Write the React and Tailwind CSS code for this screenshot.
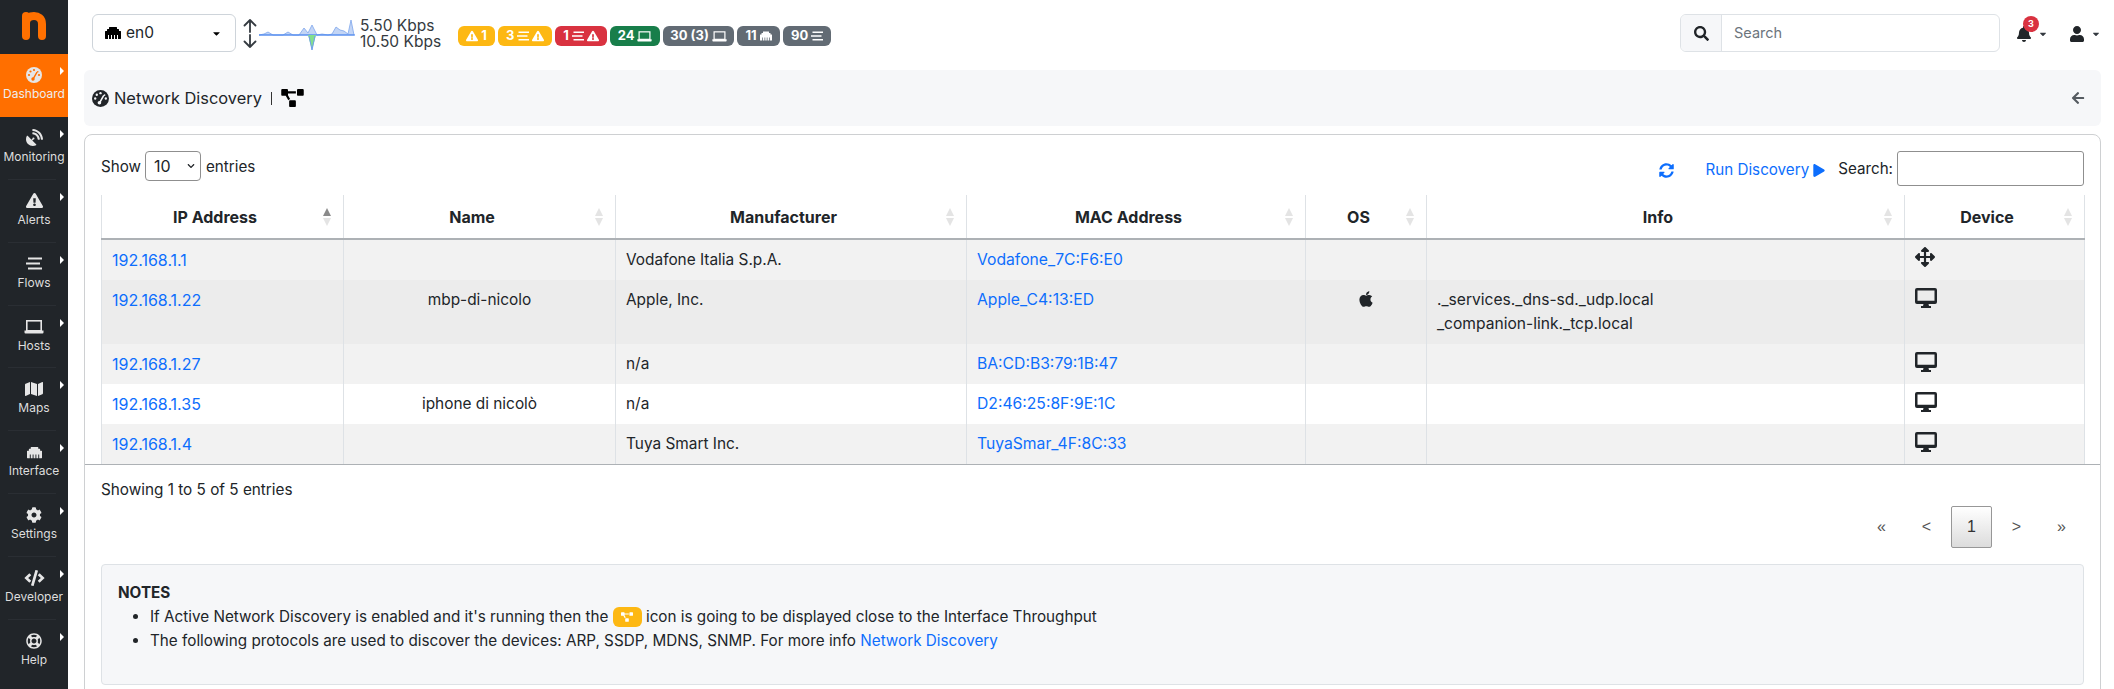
import React from "react";
import {
  FaSatelliteDish, FaExclamationTriangle, FaMap, FaEthernet, FaCog, FaCode,
  FaRegLifeRing, FaSearch, FaBell, FaUser, FaSyncAlt, FaPlay, FaProjectDiagram, FaArrowLeft, FaArrowsAlt,
  FaApple, FaCaretDown, FaChevronDown,
} from "react-icons/fa";

function Gauge({ className, hole }) {
  return (
    <svg viewBox="0 0 16 16" className={className}>
      <circle cx="8" cy="8" r="8" fill="currentColor" />
      <g fill={hole}>
        <circle cx="8" cy="3" r="1.100" />
        <circle cx="4.500" cy="4.500" r="1.100" />
        <circle cx="3" cy="8" r="1.100" />
        <circle cx="13" cy="8" r="1.100" />
        <circle cx="11.800" cy="4.800" r="0.800" />
      </g>
      <path d="M6.800 12.500 L10.800 5.500" stroke={hole} strokeWidth="1.500" strokeLinecap="round" />
      <circle cx="7" cy="12" r="1.700" fill={hole} />
    </svg>
  );
}

function Stream({ className }) {
  return (
    <svg viewBox="0 0 16 13" className={className} fill="none" stroke="currentColor" strokeWidth="2">
      <path d="M2 1.500H16M0 6.500H14M2 11.500H16" />
    </svg>
  );
}

function Laptop({ className }) {
  return (
    <svg viewBox="0 0 20 14" className={className} fill="none">
      <rect x="2.800" y="0.800" width="14.400" height="10" stroke="currentColor" strokeWidth="1.600" />
      <path d="M0.500 10.500H19.500V12.500Q19.500 13.500 18.500 13.500H1.500Q0.500 13.500 0.500 12.500Z" fill="currentColor" />
    </svg>
  );
}

function Monitor({ className }) {
  return (
    <svg viewBox="0 0 22 20" className={className}>
      <path
        fill="currentColor"
        fillRule="evenodd"
        d="M2 0H20A2 2 0 0 1 22 2V14A2 2 0 0 1 20 16H13.500L14 18H16V20H6V18H8L8.500 16H2A2 2 0 0 1 0 14V2A2 2 0 0 1 2 0ZM2.500 2.500V12.700H19.500V2.500Z"
      />
    </svg>
  );
}

function UpDown({ className }) {
  return (
    <svg viewBox="0 0 14 29" className={className} fill="none" stroke="currentColor" strokeWidth="1.800" strokeLinecap="round" strokeLinejoin="round">
      <path d="M7 1V13M1.500 6.500L7 1L12.500 6.500" />
      <path d="M7 16V28M1.500 22.500L7 28L12.500 22.500" />
    </svg>
  );
}

const nav = [
  ["Dashboard", Gauge, "w-[16px] h-[16px]", true],
  ["Monitoring", FaSatelliteDish, "w-[17px] h-[17px]"],
  ["Alerts", FaExclamationTriangle, "w-[17px] h-[17px]"],
  ["Flows", Stream, "w-[16px] h-[13px]"],
  ["Hosts", Laptop, "w-[20px] h-[14px]"],
  ["Maps", FaMap, "w-[18px] h-[16px]"],
  ["Interface", FaEthernet, "w-[17px] h-[15px]"],
  ["Settings", FaCog, "w-[16px] h-[16px]"],
  ["Developer", FaCode, "w-[21px] h-[16px]"],
  ["Help", FaRegLifeRing, "w-[16px] h-[16px]"],
];

function Sidebar() {
  return (
    <aside className="w-[68px] shrink-0 bg-[#212529] h-full flex flex-col">
      <div className="h-[54px] flex items-start justify-center pt-[12px]">
        <svg width="24" height="28" viewBox="0 0 24 28" fill="none" stroke="#ff7000" strokeWidth="8" strokeLinecap="round">
          <path d="M4 24V4" />
          <path d="M4 11C4 6 8 4 12 4S20 6 20 12V24" />
        </svg>
      </div>
      {nav.map(([label, Icon, size, active], i) => (
        <div key={label} className={`relative h-[62.900px] flex flex-col items-center pt-[12px] ${active ? "bg-[#ff6f00]" : ""}`}>
          <span className="h-[18px] flex items-center justify-center text-[#e6e6e6]">
            <Icon className={size} hole="#ff6f00" />
          </span>
          <span className={`text-[12px] leading-[16px] mt-[2px] ${active ? "text-[#eeeeee]" : "text-[#dddddd]"}`}>{label}</span>
          <span className="absolute top-[13px] left-[60px] w-0 h-0 border-y-[4px] border-l-[4px] border-y-transparent border-l-white" />
          {i > 0 && i < 9 && <span className="absolute bottom-0 left-[8px] w-[48px] h-px bg-[#2a2e33]" />}
        </div>
      ))}
    </aside>
  );
}

function Badge({ className, children }) {
  return (
    <span className={`h-[20px] rounded-[6px] flex items-center justify-center gap-[3px] text-white text-[13px] font-bold ${className}`}>
      {children}
    </span>
  );
}

function Spark() {
  return (
    <svg width="98" height="34" viewBox="260 18 98 34" className="ml-[2px] mt-[4px] shrink-0">
      <path d="M260 35 L265 34 L269 32 L274 35 L284 35 L289 32 L294 35 L300 35 L305 28 L309 33 L313 25 L318 35 L323 34 L329 35 L333 34 L337 27 L341 30 L345 31 L349 34 L352 20 L355 35 Z" fill="#c3d5f5" stroke="#7ea6ec" strokeWidth="0.800" />
      <path d="M260 35 H356" stroke="#4080f0" strokeWidth="1.200" />
      <path d="M309 35 L317 35 L313 50 Z" fill="#84e08c" />
      <path d="M310 36 L313 50 L316 36" fill="none" stroke="#6f9ff0" strokeWidth="1" />
    </svg>
  );
}

function TopBar() {
  return (
    <header className="h-[70px] flex items-center pl-[8px] pb-[4px] shrink-0">
      <div className="w-[144px] h-[38px] border border-[#ced4da] rounded-[6px] flex items-center pl-[12px] pr-[13px] text-[15.500px] text-[#212529]">
        <FaEthernet className="w-[16px] h-[16px] text-black" />
        <span className="ml-[5px]">en0</span>
        <FaCaretDown className="ml-auto w-[11px] h-[11px] text-black" />
      </div>
      <UpDown className="ml-[7px] w-[14px] h-[29px] text-[#343a40]" />
      <Spark />
      <div className="ml-[3px] mt-[2px] text-[15.500px] leading-[16px] text-[#343a40]">
        <div>5.50 Kbps</div>
        <div>10.50 Kbps</div>
      </div>
      <div className="flex gap-[3px] ml-[17px] mt-[6px]">
        <Badge className="w-[37px] bg-[#fdb813]"><FaExclamationTriangle className="w-[12px] h-[12px]" />1</Badge>
        <Badge className="w-[54px] bg-[#fdb813]">3<Stream className="w-[12px] h-[10px]" /><FaExclamationTriangle className="w-[12px] h-[12px]" /></Badge>
        <Badge className="w-[52px] bg-[#d93240]">1<Stream className="w-[12px] h-[10px]" /><FaExclamationTriangle className="w-[12px] h-[12px]" /></Badge>
        <Badge className="w-[50px] bg-[#187e4a]">24<Laptop className="w-[15px] h-[11px]" /></Badge>
        <Badge className="w-[71px] bg-[#626b74]">30 (3)<Laptop className="w-[15px] h-[11px]" /></Badge>
        <Badge className="w-[43px] bg-[#626b74]">11<FaEthernet className="w-[12px] h-[12px]" /></Badge>
        <Badge className="w-[48px] bg-[#626b74]">90<Stream className="w-[12px] h-[10px]" /></Badge>
      </div>
      <div className="ml-auto flex w-[320px] h-[38px] border border-[#dee2e6] rounded-[6px] overflow-hidden">
        <div className="w-[41px] bg-[#f6f7f9] border-r border-[#dee2e6] flex items-center justify-center">
          <FaSearch className="w-[15px] h-[15px] text-[#212529]" />
        </div>
        <div className="pl-[12px] flex items-center text-[14.500px] text-[#6c757d]">Search</div>
      </div>
      <div className="relative flex items-center ml-[17px] mt-[2px]">
        <FaBell className="w-[14px] h-[16px] text-[#212529]" />
        <span className="absolute -top-[10px] left-[6px] w-[16px] h-[16px] rounded-full bg-[#d93240] text-white text-[9px] font-bold flex items-center justify-center">3</span>
        <FaCaretDown className="ml-[7px] w-[10px] h-[10px] text-[#343a40]" />
      </div>
      <div className="flex items-center ml-[22px] mt-[2px]">
        <FaUser className="w-[14px] h-[16px] text-[#212529]" />
        <FaCaretDown className="ml-[7px] w-[10px] h-[10px] text-[#343a40]" />
      </div>
    </header>
  );
}

function Sort({ up }) {
  return (
    <span className="absolute right-[12px] top-[13px] flex flex-col gap-[2px]">
      <span className={`w-0 h-0 border-x-[4px] border-b-[8px] border-x-transparent ${up ? "border-b-[#8a8a8a]" : "border-b-[#e4e4e4]"}`} />
      <span className="w-0 h-0 border-x-[4px] border-t-[8px] border-x-transparent border-t-[#e4e4e4]" />
    </span>
  );
}

const columns = [
  ["IP Address", "w-[242px]", true],
  ["Name", "w-[272px]"],
  ["Manufacturer", "w-[351px]"],
  ["MAC Address", "w-[339px]"],
  ["OS", "w-[121px]"],
  ["Info", "w-[478px]"],
  ["Device", "w-[180px]"],
];

const rows = [
  { ip: "192.168.1.1", name: "", man: "Vodafone Italia S.p.A.", mac: "Vodafone_7C:F6:E0", dev: "move", bg: "bg-[#f2f2f2]" },
  { ip: "192.168.1.22", name: "mbp-di-nicolo", man: "Apple, Inc.", mac: "Apple_C4:13:ED", os: true, info: ["._services._dns-sd._udp.local", "_companion-link._tcp.local"], dev: "pc", bg: "bg-[#ececec]" },
  { ip: "192.168.1.27", name: "", man: "n/a", mac: "BA:CD:B3:79:1B:47", dev: "pc", bg: "bg-[#f2f2f2]" },
  { ip: "192.168.1.35", name: "iphone di nicolò", man: "n/a", mac: "D2:46:25:8F:9E:1C", dev: "pc", bg: "bg-white" },
  { ip: "192.168.1.4", name: "", man: "Tuya Smart Inc.", mac: "TuyaSmar_4F:8C:33", dev: "pc", bg: "bg-[#f2f2f2]" },
];

const td = "px-[10px] py-[8px] align-top border-r border-[#dee2e6] h-[40px]";

function DataTable() {
  return (
    <table className="w-[1983px] table-fixed border-collapse text-[15.400px] leading-[24px] text-[#212529]">
      <colgroup>
        {columns.map(([n, w]) => <col key={n} className={w} />)}
      </colgroup>
      <thead>
        <tr className="h-[44px] border-b-2 border-[#adb1b5]">
          {columns.map(([n, , up], i) => (
            <th key={n} className={`relative pl-[11px] pr-[26px] text-center text-[16px] font-bold border-r border-[#dee2e6] ${i === 0 ? "border-l" : ""}`}>
              {n}
              <Sort up={up} />
            </th>
          ))}
        </tr>
      </thead>
      <tbody>
        {rows.map((r) => (
          <tr key={r.ip} className={r.bg}>
            <td className={`${td} border-l`}><a className="block text-[#0d6efd] text-[16px] leading-[24px]">{r.ip}</a></td>
            <td className={`${td} text-center`}>{r.name}</td>
            <td className={td}>{r.man}</td>
            <td className={td}><a className="block text-[#0d6efd] text-[15.700px] leading-[24px]">{r.mac}</a></td>
            <td className={`${td} text-center`}>
              {r.os && <FaApple className="inline-block w-[16px] h-[18px] text-[#212529] -mt-[3px]" />}
            </td>
            <td className={td}>{r.info && r.info.map((l) => <div key={l} className="text-[15.600px]">{l}</div>)}</td>
            <td className={td}>
              {r.dev === "move" ? (
                <FaArrowsAlt className="w-[20px] h-[20px] -mt-[1px] text-[#212529]" />
              ) : (
                <Monitor className="w-[22px] h-[20px] text-[#212529]" />
              )}
            </td>
          </tr>
        ))}
      </tbody>
    </table>
  );
}

function Pager() {
  const items = ["«", "<", "1", ">", "»"];
  return (
    <div className="flex justify-end gap-[4px] mt-[4px] mr-[2px] font-['Liberation_Sans',sans-serif] text-[16px]">
      {items.map((t) => (
        <div
          key={t}
          className={`w-[41px] h-[42px] flex items-center justify-center rounded-[2px] ${t === "1" ? "border border-[#979797] bg-gradient-to-b from-white to-[#dcdcdc] text-[#333333]" : "text-[#555555]"}`}
        >
          {t}
        </div>
      ))}
    </div>
  );
}

function Notes() {
  return (
    <div className="mt-[16px] h-[121px] bg-[#f6f7f9] border border-[#dee2e6] rounded-[4px] px-[16px] pt-[16px] text-[15.250px] leading-[24px] text-[#212529]">
      <div className="font-bold">NOTES</div>
      <ul className="list-disc pl-[32px]">
        <li>
          If Active Network Discovery is enabled and it's running then the{" "}
          <span className="inline-flex align-middle w-[29px] h-[20px] rounded-[6px] bg-[#fdb813] items-center justify-center -mt-[2px]">
            <FaProjectDiagram className="w-[12px] h-[12px] text-white" />
          </span>{" "}
          icon is going to be displayed close to the Interface Throughput
        </li>
        <li>
          The following protocols are used to discover the devices: ARP, SSDP, MDNS, SNMP. For more info{" "}
          <a className="text-[#0d6efd]">Network Discovery</a>
        </li>
      </ul>
    </div>
  );
}

export default function App() {
  return (
    <div className="h-screen overflow-hidden flex bg-white font-[Inter,sans-serif] text-[#212529]">
      <Sidebar />
      <main className="flex-1 min-w-0 pl-[16px] pr-[13px]">
        <TopBar />
        <div className="h-[56px] bg-[#f6f7f9] rounded-[6px] flex items-center pl-[8px] pr-[16px] text-[16.400px]">
          <Gauge className="w-[17px] h-[17px] text-[#212529]" hole="#f6f7f9" />
          <span className="ml-[5px]">Network Discovery</span>
          <span className="ml-[9px] w-px h-[13px] bg-[#333333]" />
          <FaProjectDiagram className="ml-[9px] w-[23px] h-[18px] text-black" />
          <FaArrowLeft className="ml-auto w-[14px] h-[14px] text-[#555b61]" />
        </div>
        <section className="mt-[8px] border border-[#ced0d2] rounded-[8px] pt-[16px] pb-[16px]">
          <div className="px-[16px] h-[35px] flex items-start justify-between text-[15.200px] mb-[9px]">
            <div className="flex items-center h-[30px]">
              <span className="mt-[2px]">Show</span>
              <div className="ml-[4px] w-[56px] h-[30px] border border-[#8f8f8f] rounded-[4px] flex items-center pl-[8px] pr-[5px] text-[16px]">
                <span>10</span>
                <FaChevronDown className="ml-auto w-[8px] h-[8px] text-[#212529]" />
              </div>
              <span className="ml-[5px] mt-[2px]">entries</span>
            </div>
            <div className="flex items-center h-[35px]">
              <FaSyncAlt className="mt-[3px] w-[15px] h-[15px] text-[#0d6efd]" />
              <span className="ml-[31px] mt-[3px] text-[#0d6efd]">Run Discovery</span>
              <FaPlay className="ml-[4px] mt-[3px] w-[12px] h-[13px] text-[#0d6efd]" />
              <span className="ml-[13px] mt-[1px]">Search:</span>
              <div className="ml-[4px] w-[187px] h-[35px] border border-[#8f8f8f] rounded-[3px]" />
            </div>
          </div>
          <div className="px-[16px]"><DataTable /></div>
          <div className="h-px bg-[#adb1b5]" />
          <div className="px-[16px]">
            <div className="mt-[13px] text-[15.300px] leading-[24px]">Showing 1 to 5 of 5 entries</div>
            <Pager />
            <Notes />
          </div>
        </section>
      </main>
    </div>
  );
}
